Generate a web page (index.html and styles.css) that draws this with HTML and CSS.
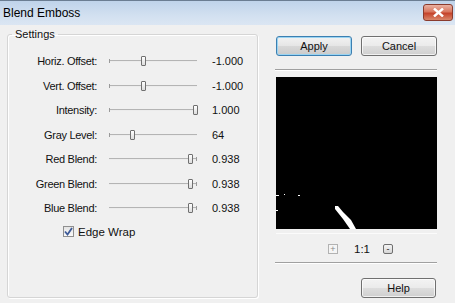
FILE: index.html
```html
<!DOCTYPE html>
<html lang="en">
<head>
    <meta charset="UTF-8">
    <title>Blend Emboss</title>
    <link rel="stylesheet" href="styles.css">
</head>
<body>
    <div class="window">
        <div class="titlebar">
            <span class="title">Blend Emboss</span>
            <button class="close-btn">
                <svg width="11" height="9" viewBox="0 0 11 9"><path d="M1 0.5 L10 8.5 M10 0.5 L1 8.5" stroke="#fff" stroke-width="2.4"/></svg>
            </button>
        </div>
        <div class="client">
            <fieldset class="settings">
                <legend>Settings</legend>
                <div class="rows">
                    <span class="label">Horiz. Offset:</span>
                    <div class="slider"><span class="thumb" style="left: 38.6%"></span></div>
                    <span class="value">-1.000</span>

                    <span class="label">Vert. Offset:</span>
                    <div class="slider"><span class="thumb" style="left: 38.6%"></span></div>
                    <span class="value">-1.000</span>

                    <span class="label">Intensity:</span>
                    <div class="slider"><span class="thumb" style="left: 97.5%"></span></div>
                    <span class="value">1.000</span>

                    <span class="label">Gray Level:</span>
                    <div class="slider"><span class="thumb" style="left: 26%"></span></div>
                    <span class="value">64</span>

                    <span class="label">Red Blend:</span>
                    <div class="slider ticked"><span class="thumb" style="left: 92%"></span></div>
                    <span class="value">0.938</span>

                    <span class="label">Green Blend:</span>
                    <div class="slider ticked"><span class="thumb" style="left: 92%"></span></div>
                    <span class="value">0.938</span>

                    <span class="label">Blue Blend:</span>
                    <div class="slider ticked"><span class="thumb" style="left: 92%"></span></div>
                    <span class="value">0.938</span>
                </div>
                <label class="check">
                    <span class="box">
                        <svg width="9" height="9" viewBox="0 0 9 9"><path d="M1 4.5 L3.5 7.5 L8 1" fill="none" stroke="#3d5a98" stroke-width="1.8"/></svg>
                    </span>
                    Edge Wrap
                </label>
            </fieldset>

            <div class="side">
                <div class="btn-row">
                    <button class="btn default">Apply</button>
                    <button class="btn">Cancel</button>
                </div>
                <div class="sep"></div>
                <div class="preview">
                    <svg width="161" height="152" viewBox="0 0 161 152">
                        <rect width="161" height="152" fill="#000"/>
                        <polygon points="59,129 62,129 67,135 75,143 80,152 74,152 67,142 59,132" fill="#fff"/>
                        <rect x="0" y="118" width="3" height="1" fill="#fff"/>
                        <rect x="8" y="117" width="1" height="1" fill="#fff"/>
                        <rect x="22" y="118" width="2" height="1" fill="#fff"/>
                        <rect x="0" y="133" width="2" height="1" fill="#fff"/>
                    </svg>
                </div>
                <div class="glow-line"></div>
                <div class="zoom-row">
                    <span class="zbtn">+</span>
                    <span class="ratio">1:1</span>
                    <span class="zbtn dark">-</span>
                </div>
                <div class="sep"></div>
                <button class="btn help">Help</button>
            </div>
        </div>
    </div>
</body>
</html>
```

FILE: styles.css
```css
body, html {
    margin: 0;
    padding: 0;
}

body {
    font-family: "Liberation Sans", Arial, sans-serif;
    font-size: 11px;
    color: #111;
}

.window {
    width: 455px;
    height: 303px;
    display: flex;
    flex-direction: column;
    background-color: #f0f0f0;
}

.titlebar {
    height: 24px;
    border-top: 1px solid #6b7d92;
    display: flex;
    align-items: center;
    justify-content: space-between;
    padding: 0 2px 0 3px;
    background: linear-gradient(#bfd3ea, #d2e0f0 60%, #dbe6f3);
}

.title {
    font-size: 12px;
    color: #000;
}

.close-btn {
    width: 30px;
    height: 17px;
    margin-top: -1px;
    padding: 0;
    border: 1px solid #8a3b2d;
    border-radius: 3px;
    display: flex;
    align-items: center;
    justify-content: center;
    background: linear-gradient(#eab1a2, #d8775f 45%, #c5432b 55%, #d9876b);
}

.client {
    flex: 1;
    display: flex;
    padding-left: 7px;
}

/* group box */
.settings {
    width: 249px;
    margin: 3px 0 5px 0;
    padding: 8px 0 0 0;
    border: 1px solid #d5d5d5;
    border-radius: 3px;
    box-shadow: inset 1px 1px #fff, 1px 1px #fff;
    min-width: 0;
}

.settings legend {
    margin-left: 4px;
    padding: 0 3px;
    line-height: 13px;
    font-size: 11px;
}

.rows {
    display: grid;
    grid-template-columns: 89px 88px auto;
    grid-auto-rows: 24.5px;
    column-gap: 12px;
    align-items: center;
}

.label {
    text-align: right;
    letter-spacing: -0.3px;
}

.value {
    padding-left: 3px;
}

.slider {
    position: relative;
    height: 12px;
}

.slider::before {
    content: "";
    position: absolute;
    left: 0;
    right: 0;
    top: 5px;
    border-top: 1px solid #b4b4b4;
    border-bottom: 1px solid #ececec;
}

.slider::after {
    content: "";
    position: absolute;
    left: 0;
    top: 4px;
    height: 4px;
    border-left: 1px solid #9a9a9a;
}

.slider.ticked::after {
    left: auto;
    right: 0;
}

.thumb {
    position: absolute;
    top: 1px;
    width: 3px;
    height: 8px;
    margin-left: -2px;
    border: 1px solid #707070;
    border-radius: 1px;
    background: linear-gradient(#ffffff, #dcdcdc);
}

.check {
    display: flex;
    align-items: center;
    gap: 4px;
    margin: 4px 0 0 55px;
    height: 14px;
    font-size: 11.5px;
}

.box {
    width: 9px;
    height: 9px;
    border: 1px solid #8f8f8f;
    background: linear-gradient(#e4e4e4, #fafafa);
    display: flex;
    align-items: center;
    justify-content: center;
}

/* right column */
.side {
    width: 162px;
    margin-left: 17px;
    display: flex;
    flex-direction: column;
}

.btn {
    width: 76px;
    height: 20px;
    padding: 0;
    font-family: "Liberation Sans", Arial, sans-serif;
    font-size: 11px;
    color: #111;
    border: 1px solid #707070;
    border-radius: 3px;
    background: linear-gradient(#f3f3f3, #ebebeb 48%, #dddddd 52%, #cfcfcf);
    box-shadow: inset 0 0 0 1px rgba(255, 255, 255, 0.7);
}

.btn.default {
    border-color: #3c7fb1;
    background: linear-gradient(#f2f2f2, #e6e6e6 48%, #d8d8d8 52%, #cacaca);
    box-shadow: inset 0 0 0 1px #9ad4f2;
}

.btn-row {
    margin-top: 11px;
    padding-left: 1px;
    display: flex;
    gap: 9px;
}

.sep {
    height: 0;
    border-top: 1px solid #a0a0a0;
    border-bottom: 1px solid #ffffff;
}

.btn-row + .sep {
    margin-top: 13px;
}

.preview {
    margin: 6px 0 0 1px;
    height: 152px;
    line-height: 0;
}

.glow-line {
    margin: 4px 0 0 1px;
    height: 1px;
    background-color: #fbfbfb;
}

.zoom-row {
    margin-top: 10px;
    height: 10px;
    display: flex;
    align-items: center;
    padding-left: 53px;
}

.zbtn {
    width: 8px;
    height: 8px;
    border: 1px solid #b2b2b2;
    background-color: #f5f5f5;
    font-size: 9px;
    line-height: 8px;
    text-align: center;
    color: #8a8a8a;
}

.zbtn.dark {
    border-color: #6f6f6f;
    border-radius: 2px;
    background: linear-gradient(#f4f4f4, #d6d6d6);
    color: #222;
}

.ratio {
    margin: 0 13px 0 16px;
    font-size: 11.5px;
}

.zoom-row + .sep {
    margin-top: 8px;
}

.btn.help {
    align-self: flex-end;
    width: 75px;
    margin: 14px 1px 0 0;
}
```
